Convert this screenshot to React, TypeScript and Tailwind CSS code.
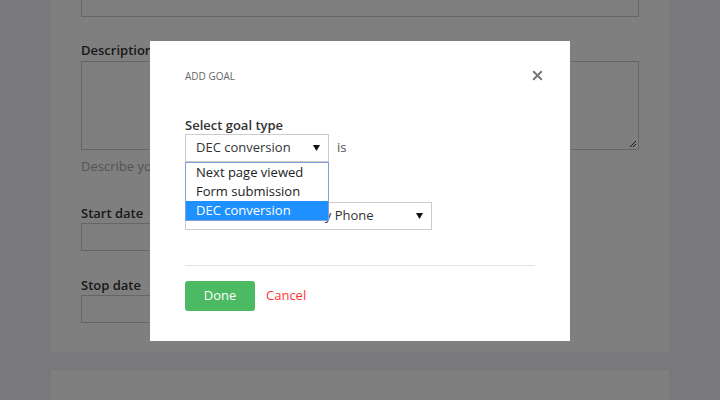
import React from 'react';
import { X } from 'lucide-react';

const goalTypes = ['Next page viewed', 'Form submission', 'DEC conversion'];

function Caret() {
  return (
    <svg width="7" height="6" viewBox="0 0 7 6" className="shrink-0">
      <path d="M0 0 H7 L3.5 6 Z" fill="#111" />
    </svg>
  );
}

function BackgroundForm() {
  return (
    <div className="flex flex-col">
      <div className="ml-[50px] -mt-[30px] w-[620px] border border-[#eee] bg-white px-[30px] pt-0 pb-[29px]">
        <div className="h-[46px] border border-[#ccc]" />
        <div className="mt-[24px] text-[13px] leading-[18px] font-semibold text-[#333]">Description</div>
        <div className="relative mt-[2px] h-[89px] border border-[#ccc]">
          <svg width="9" height="9" viewBox="0 0 9 9" className="absolute right-[1px] bottom-[1px]">
            <path d="M2 8 L8 2 M5 8 L8 5" stroke="#333" strokeWidth="1" />
          </svg>
        </div>
        <div className="mt-[7px] text-[13px] leading-[18px] text-[#aaa]">Describe your goal</div>
        <div className="mt-[29px] text-[13px] leading-[18px] font-semibold text-[#333]">Start date</div>
        <div className="mt-[1px] h-[28px] w-[240px] border border-[#ccc]" />
        <div className="mt-[25px] text-[13px] leading-[18px] font-semibold text-[#333]">Stop date</div>
        <div className="mt-[1px] h-[28px] w-[240px] border border-[#ccc]" />
      </div>
      <div className="ml-[50px] mt-[16px] h-[60px] w-[620px] border border-[#eee] bg-white" />
    </div>
  );
}

export default function App() {
  return (
    <div
      className="relative h-[400px] w-[720px] overflow-hidden bg-[#f2f2f6]"
      style={{ fontFamily: '"Open Sans", "Noto Sans", sans-serif' }}
    >
      <BackgroundForm />
      <div className="absolute inset-0 bg-black/50" />

      <div className="absolute left-[150px] top-[41px] h-[300px] w-[420px] bg-white px-[35px] pt-[27px]">
        <div className="flex items-center justify-between">
          <span className="text-[10px] leading-[14px] text-[#666]">ADD GOAL</span>
          <X className="mr-[-10px] h-[15px] w-[15px] text-[#777]" strokeWidth={3.2} />
        </div>

        <div className="mt-[33px] text-[13px] leading-[18px] font-semibold text-[#333]">Select goal type</div>
        <div className="relative">
          <div className="flex items-center gap-[8px]">
            <div className="flex h-[28px] w-[144px] items-center justify-between border border-[#ccc] pl-[10px] pr-[8px] text-[13px] text-[#333]">
              <span>DEC conversion</span>
              <Caret />
            </div>
            <span className="text-[13px] text-[#555]">is</span>
          </div>

          <div className="h-[40px]" />
          <div className="flex h-[28px] w-[247px] items-center justify-between border border-[#ccc] pl-[15px] pr-[8px] text-[13px] text-[#333]">
            <span>Conversions made by Phone</span>
            <Caret />
          </div>

          <ul className="absolute left-0 top-[28px] w-[144px] border border-[#7f9fd8] bg-white text-[13px] leading-[19px] text-[#222]">
            {goalTypes.map((t, i) => (
              <li
                key={t}
                className={`pl-[10px] ${i === goalTypes.length - 1 ? 'bg-[#1e90ff] text-white' : ''}`}
              >
                {t}
              </li>
            ))}
          </ul>
        </div>

        <div className="mt-[35px] h-px w-[350px] bg-[#e5e5e5]" />

        <div className="mt-[15px] flex items-center gap-[11px]">
          <button className="h-[30px] w-[70px] rounded-[3px] bg-[#4cb963] text-[13px] font-medium text-white">
            Done
          </button>
          <button className="text-[13px] text-[#ff3333]">Cancel</button>
        </div>
      </div>
    </div>
  );
}
